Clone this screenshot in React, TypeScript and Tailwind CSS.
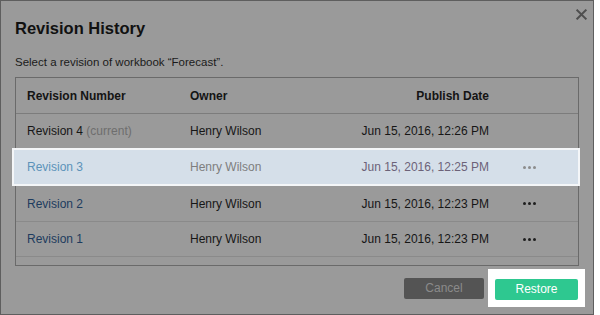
import React from 'react';

type Rev = { name: string; current?: boolean; owner: string; date: string; selected?: boolean; menu: boolean };

const revisions: Rev[] = [
  { name: 'Revision 4', current: true, owner: 'Henry Wilson', date: 'Jun 15, 2016, 12:26 PM', menu: false },
  { name: 'Revision 3', owner: 'Henry Wilson', date: 'Jun 15, 2016, 12:25 PM', selected: true, menu: true },
  { name: 'Revision 2', owner: 'Henry Wilson', date: 'Jun 15, 2016, 12:23 PM', menu: true },
  { name: 'Revision 1', owner: 'Henry Wilson', date: 'Jun 15, 2016, 12:23 PM', menu: true },
];

const Dots: React.FC<{ dim?: boolean }> = ({ dim }) => (
  <div className="flex gap-[2px]">
    {[0, 1, 2].map((i) => (
      <span key={i} className={`w-[3px] h-[3px] rounded-full ${dim ? 'bg-[#8c8c8c]' : 'bg-[#1e1e1e]'}`} />
    ))}
  </div>
);

const App: React.FC = () => {
  return (
    <div className="w-[600px] h-[315px] bg-white flex font-['Liberation_Sans',Arial,sans-serif]">
      <div className="relative w-[594px] h-[315px] bg-[#9a9a9a] border border-[#5e5e5e] px-[14px] pt-[17px] flex flex-col">
        {/* close */}
        <button className="absolute right-[6px] top-[7px] w-[12px] h-[12px] flex items-center justify-center">
          <svg viewBox="0 0 12 12" className="w-[11px] h-[11px]">
            <path d="M1.5 1.5 L10.5 10.5 M10.5 1.5 L1.5 10.5" stroke="#4e4e4e" strokeWidth="2.2" strokeLinecap="square" />
          </svg>
        </button>

        <h1 className="text-[16.5px] leading-[20px] font-bold text-[#111]">Revision History</h1>
        <p className="mt-[16px] text-[11.5px] leading-[16px] text-[#1a1a1a]">
          Select a revision of workbook “Forecast”.
        </p>

        {/* table */}
        <div className="mt-[7px] border border-[#6a6a6a] flex flex-col">
          <div className="h-[36px] border-b border-[#7c7c7c] grid grid-cols-[163px_150px_149px_80px] items-center pl-[11px] text-[12px] font-bold text-[#141414]">
            <span>Revision Number</span>
            <span>Owner</span>
            <span className="text-right">Publish Date</span>
            <span />
          </div>

          {revisions.map((r, idx) =>
            r.selected ? (
              <div
                key={r.name}
                className="h-[38px] -ml-[4px] -mr-[2px] border-2 border-[#f4f6f8] bg-[#d5dfe9] grid grid-cols-[163px_150px_149px_80px] items-center pl-[13px] text-[12px]"
              >
                <span className="text-[#5c93b9]">{r.name}</span>
                <span className="text-[#7e7e7e]">{r.owner}</span>
                <span className="text-right text-[#6c6278]">{r.date}</span>
                <span className="flex justify-center"><Dots dim /></span>
              </div>
            ) : (
              <div
                key={r.name}
                className={`grid grid-cols-[163px_150px_149px_80px] items-center pl-[11px] text-[12px] ${
                  idx === 0 ? 'h-[34px]' : idx === 2 ? 'h-[36px] border-b border-[#8a8a8a]' : 'h-[35px] border-b border-[#8a8a8a]'
                }`}
              >
                <span className={r.current ? 'text-[#161616]' : 'text-[#1d3c5e]'}>
                  {r.name}
                  {r.current && <span className="text-[#6e6e6e]"> (current)</span>}
                </span>
                <span className="text-[#161616]">{r.owner}</span>
                <span className="text-right text-[#161616]">{r.date}</span>
                <span className="flex justify-center">{r.menu && <Dots />}</span>
              </div>
            )
          )}
          <div className="h-[8px]" />
        </div>

        {/* footer */}
        <div className="mt-[3px] flex justify-end items-center -mr-[6px]">
          <button className="w-[80px] h-[21px] bg-[#545454] rounded-[2px] text-[12px] text-[#8b8b8b] mr-[4px]">
            Cancel
          </button>
          <div className="bg-white px-[7px] py-[7px]">
            <button className="w-[83px] h-[21px] bg-[#2ec890] rounded-[2px] text-[12px] text-white">
              Restore
            </button>
          </div>
        </div>
      </div>
    </div>
  );
};

export default App;
